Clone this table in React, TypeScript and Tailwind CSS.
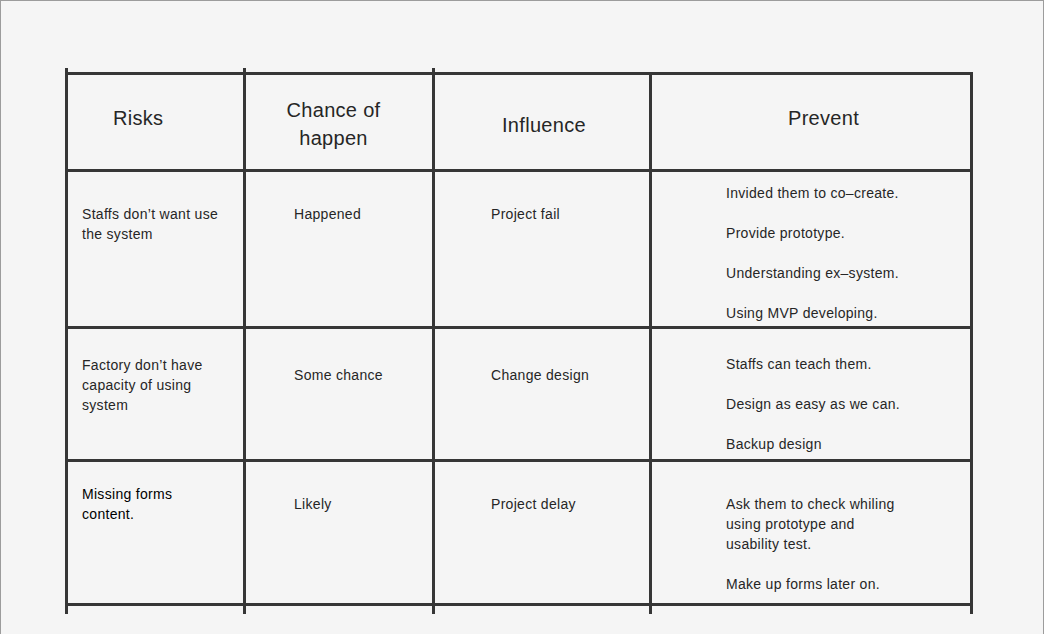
import React from "react";

interface Row {
  risk: string[];
  riskClass?: string;
  riskPt: string;
  chance: string;
  influence: string;
  sidePt: string;
  prevent: string[][];
  preventPt: string;
}

const rows: Row[] = [
  {
    risk: ["Staffs don’t want use", "the system"],
    riskPt: "pt-[32px]",
    chance: "Happened",
    influence: "Project fail",
    sidePt: "pt-[32px]",
    prevent: [
      ["Invided them to co–create."],
      ["Provide prototype."],
      ["Understanding ex–system."],
      ["Using MVP developing."],
    ],
    preventPt: "pt-[11px]",
  },
  {
    risk: ["Factory don’t have", "capacity of using", "system"],
    riskPt: "pt-[26px]",
    chance: "Some chance",
    influence: "Change design",
    sidePt: "pt-[36px]",
    prevent: [["Staffs can teach them."], ["Design as easy as we can."], ["Backup design"]],
    preventPt: "pt-[25px]",
  },
  {
    risk: ["Missing forms", "content."],
    riskClass: "text-black",
    riskPt: "pt-[22px]",
    chance: "Likely",
    influence: "Project delay",
    sidePt: "pt-[32px]",
    prevent: [
      ["Ask them to check whiling", "using prototype and", "usability test."],
      ["Make up forms later on."],
    ],
    preventPt: "pt-[32px]",
  },
];

const cell = "bg-[#f5f5f5]";
const ticks = "grid grid-cols-[3px_175px_3px_186px_3px_214px_3px_318px_3px]";

export default function App() {
  return (
    <div
      className="h-[634px] overflow-hidden bg-[#f5f5f5] border-t border-l border-r border-[#9c9c9c] pl-[64px] pt-[67px]"
      style={{ fontFamily: '"Liberation Sans", Arial, sans-serif' }}
    >
      <div className="w-fit">
        {/* top overhangs of the hand-drawn lines */}
        <div className={`${ticks} h-[4px]`}>
          <div className="bg-[#363636]" />
          <div />
          <div className="bg-[#363636]" />
          <div />
          <div className="bg-[#363636]" />
        </div>

        <div className="grid grid-cols-[175px_186px_214px_318px] grid-rows-[94px_154px_130px_141px] gap-[3px] p-[3px] bg-[#363636] text-[#262626] tracking-[0.3px]">
          {/* Header */}
          <div className={`${cell} pl-[45px] pt-[29px] text-[20px] leading-[28px]`}>Risks</div>
          <div className={`${cell} pr-[11px] pt-[21px] text-center text-[20px] leading-[28px]`}>
            Chance of
            <br />
            happen
          </div>
          <div className={`${cell} pl-[67px] pt-[36px] text-[20px] leading-[28px]`}>Influence</div>
          <div className={`${cell} pl-[136px] pt-[29px] text-[20px] leading-[28px]`}>Prevent</div>

          {rows.map((r, i) => (
            <React.Fragment key={i}>
              <div className={`${cell} pl-[14px] ${r.riskPt} text-[14px] leading-[20px] ${r.riskClass ?? ""}`}>
                {r.risk.map((l) => (
                  <div key={l}>{l}</div>
                ))}
              </div>
              <div className={`${cell} pl-[48px] ${r.sidePt} text-[14px] leading-[20px]`}>{r.chance}</div>
              <div className={`${cell} pl-[56px] ${r.sidePt} text-[14px] leading-[20px]`}>{r.influence}</div>
              <div className={`${cell} pl-[74px] ${r.preventPt} flex flex-col gap-5 text-[14px] leading-[20px]`}>
                {r.prevent.map((p, j) => (
                  <div key={j}>
                    {p.map((l) => (
                      <div key={l}>{l}</div>
                    ))}
                  </div>
                ))}
              </div>
            </React.Fragment>
          ))}
        </div>

        {/* bottom overhangs */}
        <div className={`${ticks} h-[8px]`}>
          <div className="bg-[#363636]" />
          <div />
          <div className="bg-[#363636]" />
          <div />
          <div className="bg-[#363636]" />
          <div />
          <div className="bg-[#363636]" />
          <div />
          <div className="bg-[#363636]" />
        </div>
      </div>
    </div>
  );
}
